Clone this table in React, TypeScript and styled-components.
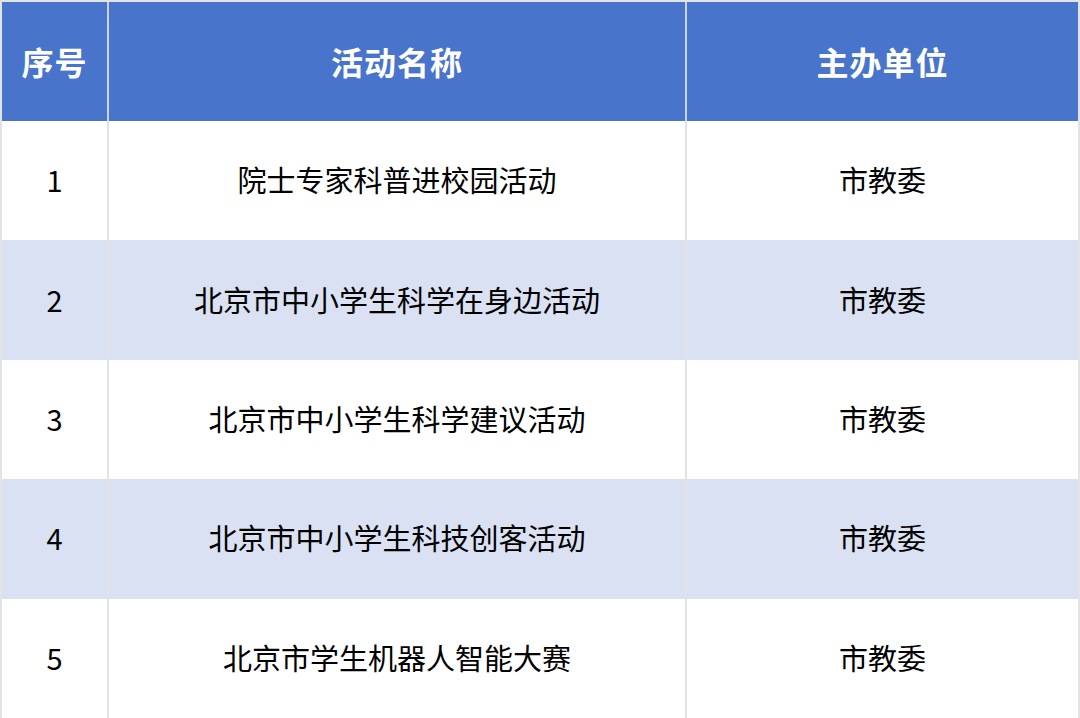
import styled, { createGlobalStyle } from 'styled-components';

const GlobalStyle = createGlobalStyle`
  html, body {
    margin: 0;
    padding: 0;
    background: #ffffff;
    overflow: hidden;
  }
  body {
    font-family: "Noto Sans CJK SC", "Noto Sans", sans-serif;
  }
`;

interface ActivityRow {
  id: number;
  name: string;
  host: string;
}

const rows: ActivityRow[] = [
  { id: 1, name: '院士专家科普进校园活动', host: '市教委' },
  { id: 2, name: '北京市中小学生科学在身边活动', host: '市教委' },
  { id: 3, name: '北京市中小学生科学建议活动', host: '市教委' },
  { id: 4, name: '北京市中小学生科技创客活动', host: '市教委' },
  { id: 5, name: '北京市学生机器人智能大赛', host: '市教委' },
];

function App() {
  return (
    <>
      <GlobalStyle />
      <Table>
        <HeaderRow>
          <HeadCell>序号</HeadCell>
          <HeadCell>活动名称</HeadCell>
          <HeadCell>主办单位</HeadCell>
        </HeaderRow>
        {rows.map((row) => (
          <BodyRow key={row.id} $striped={row.id % 2 === 0}>
            <Cell>{row.id}</Cell>
            <Cell>{row.name}</Cell>
            <Cell>{row.host}</Cell>
          </BodyRow>
        ))}
      </Table>
    </>
  );
}

const Table = styled.div`
  width: 1080px;
  height: 718px;
  box-sizing: border-box;
  padding: 2px 2px 0 2px;
  background: #e3e3e3;
  display: flex;
  flex-direction: column;
`;

const HeaderRow = styled.div`
  display: grid;
  grid-template-columns: 105px 576px 1fr;
  column-gap: 2px;
  height: 119px;
  flex-shrink: 0;
  background: #c9d4ee;
`;

const HeadCell = styled.div`
  display: flex;
  align-items: center;
  justify-content: center;
  padding-bottom: 2px;
  background: #4874cb;
  color: #ffffff;
  font-size: 32px;
  font-weight: 700;
  letter-spacing: 1px;
`;

const BodyRow = styled.div<{ $striped: boolean }>`
  display: grid;
  grid-template-columns: 105px 576px 1fr;
  column-gap: 2px;
  height: 119.4px;
  flex-shrink: 0;

  & > div {
    background: ${({ $striped }) => ($striped ? '#d9e1f2' : '#ffffff')};
  }
`;

const Cell = styled.div`
  display: flex;
  align-items: center;
  justify-content: center;
  padding-bottom: 3px;
  color: #000000;
  font-size: 29px;
  font-weight: 400;
`;

export default App;
